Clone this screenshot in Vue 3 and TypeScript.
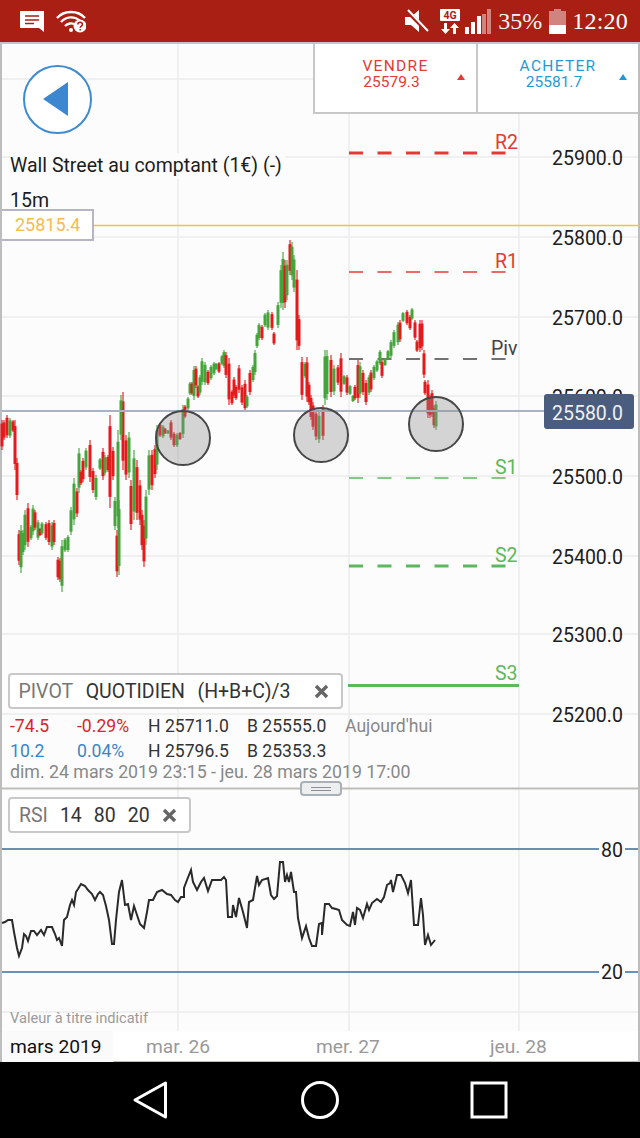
<script setup lang="ts">
type Bar = [number, number, number, 'r' | 'g']

// x, haut, bas, couleur - relevés sur le graphique
const bars: Bar[] = [
  [2, 420, 450, 'r'], [4, 420, 440, 'r'], [7, 415, 438, 'r'], [10, 418, 438, 'g'], [13, 420, 432, 'r'], [15, 420, 470, 'r'],
  [17, 458, 500, 'r'], [19, 530, 565, 'r'], [21, 525, 573, 'g'], [23, 530, 555, 'g'], [25, 510, 550, 'g'], [28, 503, 547, 'r'],
  [31, 525, 540, 'g'], [33, 505, 535, 'g'], [35, 510, 530, 'r'], [38, 520, 540, 'g'], [40, 528, 536, 'r'], [42, 522, 535, 'g'],
  [46, 522, 540, 'r'], [49, 520, 545, 'r'], [52, 522, 550, 'g'], [54, 520, 545, 'r'], [58, 557, 580, 'r'], [60, 558, 582, 'r'],
  [62, 540, 592, 'g'], [65, 538, 552, 'g'], [68, 535, 552, 'g'], [71, 507, 535, 'g'], [74, 478, 525, 'g'], [77, 488, 517, 'r'],
  [79, 448, 493, 'g'], [81, 470, 485, 'r'], [83, 458, 482, 'r'], [86, 448, 470, 'g'], [90, 440, 482, 'r'], [93, 468, 493, 'r'],
  [96, 475, 500, 'g'], [100, 458, 470, 'g'], [103, 448, 480, 'r'], [105, 455, 475, 'g'], [108, 455, 472, 'r'], [110, 415, 508, 'r'],
  [113, 447, 480, 'r'], [115, 497, 530, 'g'], [117, 530, 577, 'r'], [119, 500, 575, 'g'], [118, 430, 528, 'g'], [123, 392, 470, 'r'],
  [121, 395, 440, 'g'], [126, 435, 480, 'r'], [129, 432, 478, 'g'], [131, 480, 530, 'r'], [134, 450, 520, 'g'], [137, 460, 520, 'r'],
  [140, 480, 525, 'r'], [142, 510, 550, 'r'], [144, 520, 567, 'r'], [146, 490, 545, 'g'], [149, 450, 495, 'g'], [152, 450, 490, 'r'],
  [155, 445, 478, 'r'], [157, 425, 470, 'g'], [160, 423, 437, 'r'], [163, 425, 438, 'g'], [165, 428, 434, 'r'], [168, 430, 434, 'g'],
  [171, 420, 440, 'r'], [174, 432, 447, 'r'], [177, 433, 447, 'g'], [180, 432, 440, 'r'], [183, 405, 438, 'g'], [185, 405, 418, 'r'],
  [188, 397, 410, 'g'], [190, 382, 395, 'g'], [192, 382, 395, 'r'], [194, 366, 400, 'g'], [196, 366, 388, 'r'], [198, 385, 398, 'r'],
  [200, 375, 395, 'g'], [202, 358, 385, 'g'], [205, 362, 385, 'g'], [208, 370, 385, 'r'], [211, 365, 380, 'g'], [214, 362, 375, 'g'],
  [216, 363, 370, 'g'], [219, 362, 373, 'r'], [222, 355, 365, 'g'], [224, 350, 368, 'g'], [226, 352, 378, 'r'], [229, 358, 405, 'r'],
  [232, 390, 405, 'r'], [234, 377, 398, 'r'], [236, 385, 400, 'r'], [239, 365, 393, 'r'], [242, 385, 405, 'r'], [245, 380, 412, 'r'],
  [247, 395, 408, 'g'], [250, 370, 395, 'r'], [253, 365, 382, 'g'], [255, 350, 375, 'g'], [257, 333, 348, 'g'], [259, 323, 340, 'g'],
  [262, 325, 340, 'r'], [265, 313, 327, 'g'], [268, 310, 330, 'g'], [272, 312, 330, 'r'], [274, 332, 345, 'r'], [278, 302, 328, 'g'],
  [281, 265, 308, 'g'], [283, 252, 310, 'g'], [285, 260, 308, 'r'], [287, 260, 300, 'g'], [290, 240, 275, 'r'], [292, 242, 280, 'g'],
  [294, 255, 292, 'g'], [297, 270, 350, 'r'], [299, 315, 350, 'r'], [302, 357, 400, 'r'], [305, 362, 378, 'g'], [307, 357, 402, 'r'],
  [309, 382, 405, 'r'], [311, 395, 420, 'r'], [313, 402, 430, 'r'], [316, 410, 440, 'r'], [319, 412, 443, 'g'], [323, 405, 440, 'r'],
  [325, 350, 405, 'g'], [327, 350, 400, 'g'], [331, 355, 397, 'r'], [334, 365, 395, 'g'], [338, 365, 385, 'r'], [341, 353, 397, 'r'],
  [344, 375, 385, 'g'], [347, 375, 395, 'r'], [350, 385, 395, 'g'], [353, 395, 402, 'g'], [355, 385, 400, 'r'], [358, 360, 403, 'r'],
  [360, 362, 398, 'g'], [363, 370, 395, 'r'], [366, 380, 405, 'r'], [369, 375, 395, 'g'], [371, 370, 392, 'r'], [374, 365, 380, 'g'],
  [377, 360, 372, 'g'], [380, 350, 365, 'g'], [382, 360, 378, 'r'], [385, 358, 366, 'g'], [388, 350, 360, 'g'], [391, 340, 358, 'g'],
  [394, 330, 348, 'g'], [398, 322, 345, 'g'], [400, 320, 342, 'r'], [403, 312, 322, 'g'], [407, 310, 325, 'r'], [410, 315, 330, 'r'],
  [412, 308, 320, 'g'], [415, 320, 340, 'r'], [417, 340, 352, 'r'], [420, 320, 352, 'r'], [422, 320, 350, 'r'], [424, 350, 378, 'r'],
  [425, 380, 395, 'r'], [428, 380, 418, 'r'], [430, 395, 418, 'r'], [432, 390, 417, 'r'], [434, 405, 428, 'r'], [436, 401, 430, 'g'],
]

const rsi: number[][] = [
  [2, 923], [5, 922], [8, 920], [12, 920], [14, 932], [17, 948], [19, 956], [22, 948], [24, 934], [26, 936], [28, 941], [31, 931],
  [34, 931], [37, 935], [41, 930], [44, 935], [47, 927], [52, 927], [55, 934], [57, 940], [59, 938], [62, 946], [64, 920], [67, 917],
  [70, 905], [72, 900], [74, 905], [76, 892], [78, 889], [81, 884], [85, 886], [88, 890], [92, 894], [95, 900], [98, 894], [100, 892],
  [103, 895], [106, 906], [109, 920], [112, 944], [114, 944], [116, 920], [119, 892], [122, 880], [125, 905], [128, 904], [131, 920],
  [134, 906], [137, 915], [140, 924], [144, 928], [147, 912], [149, 900], [153, 900], [157, 892], [162, 890], [167, 894], [171, 895],
  [175, 900], [178, 902], [181, 897], [184, 897], [184, 888], [187, 880], [191, 870], [193, 882], [197, 890], [201, 882], [204, 878],
  [208, 891], [212, 880], [217, 880], [221, 880], [224, 877], [226, 880], [228, 917], [232, 917], [233, 905], [236, 917], [239, 898],
  [243, 912], [247, 928], [249, 902], [253, 900], [257, 876], [259, 885], [262, 880], [268, 878], [271, 895], [274, 899], [277, 896],
  [280, 862], [283, 862], [285, 882], [287, 875], [289, 882], [291, 872], [294, 892], [296, 892], [298, 918], [302, 938], [306, 926],
  [309, 938], [312, 946], [316, 946], [319, 924], [322, 923], [322, 935], [325, 904], [329, 904], [332, 908], [336, 909], [339, 910],
  [342, 920], [347, 925], [350, 926], [353, 912], [355, 925], [357, 908], [360, 910], [363, 918], [367, 904], [369, 910], [372, 903],
  [377, 899], [381, 902], [384, 897], [387, 885], [390, 883], [391, 880], [393, 892], [397, 875], [401, 875], [405, 883], [408, 893],
  [411, 880], [414, 925], [418, 925], [421, 898], [423, 915], [425, 945], [428, 935], [431, 945], [435, 940],
]
const rsiPoints = rsi.map((p) => p.join(',')).join(' ')

const gridY = [79, 157, 237, 317, 396, 476, 556, 634, 714, 849, 1012]
const gridX = [178, 349, 519]
const axis = [
  { y: 157, label: '25900.0' }, { y: 237, label: '25800.0' }, { y: 317, label: '25700.0' }, { y: 396, label: '25600.0' },
  { y: 476, label: '25500.0' }, { y: 556, label: '25400.0' }, { y: 634, label: '25300.0' }, { y: 714, label: '25200.0' },
]
const levels = [
  { name: 'R2', x: 495, y: 153, w: 3, c: '#e53935', ty: 149 },
  { name: 'R1', x: 495, y: 272, w: 1.5, c: '#e53935', ty: 268 },
  { name: 'Piv', x: 491, y: 359, w: 1.5, c: '#444', ty: 355 },
  { name: 'S1', x: 495, y: 478, w: 1.5, c: '#5cb85c', ty: 474 },
  { name: 'S2', x: 495, y: 566, w: 3, c: '#5cb85c', ty: 562 },
]
const circles = [[183, 438], [321, 435], [436, 424]]
const stats = [
  { a: '-74.5', b: '-0.29%', h: 'H 25711.0', l: 'B 25555.0', cls: 'neg', day: "Aujourd'hui" },
  { a: '10.2', b: '0.04%', h: 'H 25796.5', l: 'B 25353.3', cls: 'pos', day: '' },
]
</script>

<template>
  <div class="page">
    <header class="status">
      <svg class="ic" width="24" height="21" viewBox="0 0 24 21"><path d="M0 0h24v21l-5-4H0z" fill="#fff" /><path d="M5 5h14M5 9h14M5 12.500h9" stroke="#a91f13" stroke-width="1.500" /></svg>
      <svg class="ic wifi" width="30" height="24" viewBox="0 0 30 24" fill="none">
        <path d="M1 9C8 1 22 1 29 9M5 13C10 7 19 7 24 12M9 17c3-3 7-3 9-2" stroke="#fff" stroke-width="2.400" />
        <circle cx="15" cy="21" r="2" fill="#fff" />
        <circle cx="24" cy="17" r="6.500" fill="#fff" />
        <path d="M21.800 15.500c0-3 4.600-3 4.600 0 0 1.600-2.200 1.600-2.200 3.300M24.200 20v1.500" stroke="#a91f13" stroke-width="1.500" />
      </svg>
      <span class="spacer"></span>
      <svg class="ic" width="24" height="24" viewBox="0 0 24 24"><path d="M0 8h6l8-7v22l-8-7H0z" fill="#fff" /><path d="M2 2l21 21" stroke="#a91f13" stroke-width="4" /><path d="M3 1l20 21" stroke="#fff" stroke-width="2" /></svg>
      <svg class="ic net" width="20" height="25" viewBox="0 0 20 25">
        <rect y="0" width="20" height="12" rx="1" fill="#fff" />
        <text x="10" y="10" class="net-t">4G</text>
        <path d="M4 14h3v6h3l-4.500 5-4.500-5h3zM13 25v-6h-3l4.500-5 4.500 5h-3v6z" fill="#fff" />
      </svg>
      <svg class="ic sig" width="26" height="25" viewBox="0 0 26 25">
        <path d="M0 18h4v7H0zM6 13h4v12H6zM12 7h4v18h-4z" fill="#fff" />
        <path d="M17 5h4v20h-4zM22 0h4v25h-4z" fill="#fff" opacity=".45" />
      </svg>
      <span class="pct">35%</span>
      <svg class="ic bat" width="17" height="25" viewBox="0 0 17 25"><path d="M5 0h7v2h5v23H0V2h5z" fill="#fff" opacity=".45" /><path d="M0 16h17v9H0z" fill="#fff" /></svg>
      <span class="clock">12:20</span>
    </header>

    <main class="chart">
      <svg class="plot" width="640" height="1018" viewBox="0 44 640 1018">
        <g class="grid">
          <line v-for="y in gridY" :key="y" x1="2" x2="638" :y1="y" :y2="y" />
          <line v-for="x in gridX" :key="x" :x1="x" :x2="x" y1="44" y2="1032" />
        </g>

        <line class="orange" x1="94" x2="640" y1="225.500" y2="225.500" />

        <g v-for="l in levels" :key="l.name">
          <line x1="349" x2="506" :y1="l.y" :y2="l.y" :stroke="l.c" :stroke-width="l.w" stroke-dasharray="14 14.500" />
          <text :x="l.x" :y="l.ty" class="lvl" :fill="l.c">{{ l.name }}</text>
        </g>
        <line x1="348" x2="519" y1="685.500" y2="685.500" stroke="#5cb85c" stroke-width="3" />
        <text x="495" y="680" class="lvl" fill="#5cb85c">S3</text>

        <text v-for="a in axis" :key="a.y" x="552" :y="a.y + 7.500" class="ax">{{ a.label }}</text>

        <g v-for="b in bars" :key="b[0] + '-' + b[1]">
          <rect :x="b[0] - 0.7" :y="b[1]" width="1.400" :height="b[2] - b[1]" :class="b[3]" opacity=".8" />
          <rect :x="b[0] - 1.500" :y="b[1] + (b[2] - b[1]) * 0.12" width="3" :height="(b[2] - b[1]) * 0.76" :class="b[3]" />
        </g>

        <line class="price" x1="2" x2="544" y1="411" y2="411" />
        <circle v-for="c in circles" :key="c[0]" :cx="c[0]" :cy="c[1]" r="27" class="zone" />

        <rect x="544" y="394" width="90" height="35" rx="3" fill="#4a5d7e" />
        <text x="552" y="419.500" class="ax light">25580.0</text>

        <line class="sep" x1="2" x2="638" y1="788.500" y2="788.500" />

        <line class="blue" x1="2" x2="638" y1="849" y2="849" />
        <line class="blue" x1="2" x2="638" y1="972" y2="972" />
        <rect x="599" y="840" width="26" height="20" fill="#fcfcfc" />
        <rect x="599" y="962" width="26" height="20" fill="#fcfcfc" />
        <text x="601" y="856.500" class="ax">80</text>
        <text x="601" y="979" class="ax">20</text>
        <polyline class="rsi" :points="rsiPoints" />
      </svg>

      <button class="back" type="button">
        <svg width="26" height="35" viewBox="0 0 26 35"><path d="M25 0v34L0 17z" fill="#3c87cf" /></svg>
      </button>

      <div class="quotes">
        <div class="quote sell">
          <div class="q-text"><span class="q-name">VENDRE</span><span class="q-val">25579.3</span></div>
          <i class="tri"></i>
        </div>
        <div class="quote buy">
          <div class="q-text"><span class="q-name">ACHETER</span><span class="q-val">25581.7</span></div>
          <i class="tri"></i>
        </div>
      </div>

      <div class="title">Wall Street au comptant (1€) (-)</div>
      <div class="tf">15m</div>
      <div class="last">25815.4</div>

      <div class="panel">
        <div class="tag pivot">
          <span class="g">PIVOT</span><span>QUOTIDIEN</span><span>(H+B+C)/3</span>
          <svg class="x" width="15" height="15" viewBox="0 0 15 15"><path d="M2 2l11 11M13 2L2 13" stroke="#666" stroke-width="3.400" /></svg>
        </div>
        <div class="stats">
          <div v-for="s in stats" :key="s.a" class="row">
            <span class="c1" :class="s.cls">{{ s.a }}</span>
            <span class="c2" :class="s.cls">{{ s.b }}</span>
            <span class="c3">{{ s.h }}</span>
            <span class="c4">{{ s.l }}</span>
            <span class="day">{{ s.day }}</span>
          </div>
          <div class="range">dim. 24 mars 2019 23:15 - jeu. 28 mars 2019 17:00</div>
        </div>
      </div>

      <div class="handle"><i></i></div>

      <div class="tag rsi-tag">
        <span class="g">RSI</span><span>14</span><span>80</span><span>20</span>
        <svg class="x" width="15" height="15" viewBox="0 0 15 15"><path d="M2 2l11 11M13 2L2 13" stroke="#666" stroke-width="3.400" /></svg>
      </div>

      <div class="note">Valeur à titre indicatif</div>

      <footer class="dates">
        <span class="month">mars 2019</span>
        <span class="d d1">mar. 26</span>
        <span class="d d2">mer. 27</span>
        <span class="d d3">jeu. 28</span>
      </footer>
    </main>

    <nav class="nav">
      <svg width="36" height="40" viewBox="0 0 36 40" fill="none"><path d="M33.500 3v34L3 20z" stroke="#fff" stroke-width="3" stroke-linejoin="round" /></svg>
      <svg class="home" width="40" height="40" viewBox="0 0 40 40" fill="none"><circle cx="20" cy="20" r="17.500" stroke="#fff" stroke-width="3" /></svg>
      <svg class="recent" width="40" height="40" viewBox="0 0 40 40" fill="none"><rect x="3" y="3" width="34" height="34" stroke="#fff" stroke-width="3" /></svg>
    </nav>
  </div>
</template>

<style scoped>
.page {
  width: 640px;
  height: 1138px;
  display: flex;
  flex-direction: column;
  overflow: hidden;
  font-family: Roboto, "Liberation Sans", sans-serif;
}

.status {
  height: 42px;
  background: #a91f13;
  border-bottom: 2px solid #c4c4c4;
  display: flex;
  align-items: center;
  padding: 0 12px 0 20px;
  color: #fff;
  font-family: "Liberation Serif", serif;
  flex: none;
}
.ic { flex: none; }
.wifi { margin-left: 12px; }
.spacer { flex: 1; }
.net { margin-left: 11px; }
.net-t {
  font: 700 10.500px Roboto, sans-serif;
  text-anchor: middle;
  fill: #a91f13;
}
.sig { margin-left: 5px; }
.pct { font-size: 24px; margin-left: 7px; opacity: .95; }
.bat { margin-left: 7px; }
.clock { font-size: 24px; margin-left: 6px; letter-spacing: .2px; }

.chart {
  position: relative;
  flex: 1;
  background: #fcfcfc;
  border-left: 2px solid #bdbdbd;
  border-right: 2px solid #bdbdbd;
}
.plot { position: absolute; left: -2px; top: 0; }

.grid line { stroke: #ececec; stroke-width: 1.500; }
.orange { stroke: #f9bb4c; stroke-width: 1.500; }
.price { stroke: #a9b2c4; stroke-width: 2; }
.sep { stroke: #bdbdb5; stroke-width: 2; }
.blue { stroke: #3a6ea5; stroke-width: 1.500; }
.rsi { fill: none; stroke: #2a2a2a; stroke-width: 2; }
.zone { fill: rgba(140, 140, 140, .36); stroke: #474747; stroke-width: 2; }
.r { fill: #e41a1c; }
.g { fill: #43a53a; }
.lvl { font-size: 19.500px; }
.ax { font-size: 19.500px; fill: #1c1c1c; }
.light { fill: #f0f0f0; }

.back {
  position: absolute;
  left: 21px;
  top: 21px;
  width: 69px;
  height: 69px;
  padding: 0 0 0 4px;
  box-sizing: border-box;
  border: 2px solid #3f8bd0;
  border-radius: 50%;
  background: #fff;
  display: flex;
  align-items: center;
  justify-content: center;
}
.back svg { margin-right: 8px; }

.quotes {
  position: absolute;
  right: 0;
  top: 0;
  width: 325px;
  height: 70px;
  box-sizing: border-box;
  display: flex;
  background: #fff;
  border-left: 2px solid #c8c8c8;
  border-bottom: 2px solid #c8c8c8;
}
.quote {
  position: relative;
  display: flex;
  justify-content: center;
  padding-top: 14px;
  box-sizing: border-box;
}
.sell { width: 163px; flex: none; color: #e53935; border-right: 2px solid #c8c8c8; }
.buy { flex: 1; color: #1e9bd7; }
.q-text {
  display: flex;
  flex-direction: column;
  align-items: center;
  line-height: 16px;
}
.q-name { font-size: 15.500px; letter-spacing: 1.300px; }
.q-val { font-size: 15.500px; padding-right: 8px; }
.tri {
  position: absolute;
  right: 11px;
  top: 30px;
  border-left: 4px solid transparent;
  border-right: 4px solid transparent;
  border-bottom: 6px solid currentColor;
}

.title, .tf {
  position: absolute;
  left: 8px;
  font-size: 19.500px;
  color: #1c1c1c;
  line-height: 26px;
  background: #fcfcfc;
  white-space: nowrap;
}
.title { top: 109px; padding-right: 3px; }
.tf { top: 145px; padding-right: 3px; line-height: 24px; }
.last {
  position: absolute;
  left: 0;
  top: 165px;
  width: 92px;
  height: 32px;
  box-sizing: border-box;
  background: #fff;
  border: 2px solid #b5b5c5;
  border-left: none;
  color: #f9bb4c;
  font-size: 18px;
  line-height: 28px;
  padding-left: 13px;
}

.tag {
  display: flex;
  align-items: center;
  box-sizing: border-box;
  background: #fff;
  border: 2px solid #c8c8c8;
  border-radius: 4px;
  font-size: 19.500px;
  color: #333;
  white-space: nowrap;
}
.tag .g { color: #777; fill: none; }
.tag .x { margin-left: auto; flex: none; }
.pivot {
  width: 335px;
  height: 36px;
  padding: 0 12px 0 8.500px;
  gap: 12.500px;
}
.panel { position: absolute; left: 6px; top: 629px; }
.stats { margin: 6px 0 0 2px; font-size: 17.600px; color: #333; }
.row { display: flex; height: 25px; line-height: 22px; }
.c1 { width: 67px; }
.c2 { width: 71px; }
.c3 { width: 99px; }
.c4 { width: 98px; }
.day { color: #888; }
.neg { color: #d7262a; }
.pos { color: #3d85c6; }
.range { color: #888; line-height: 18px; margin-top: -2px; font-size: 17.750px; }

.handle {
  position: absolute;
  left: 298px;
  top: 737px;
  width: 42px;
  height: 15px;
  box-sizing: border-box;
  background: #eceef0;
  border: 2px solid #aab0b8;
  border-radius: 4px;
  display: flex;
  align-items: center;
  justify-content: center;
}
.handle i {
  width: 20px;
  height: 4px;
  box-sizing: border-box;
  border-top: 1px solid #8a8f96;
  border-bottom: 1px solid #8a8f96;
}

.rsi-tag {
  position: absolute;
  left: 6px;
  top: 753px;
  width: 183px;
  height: 36px;
  padding: 0 17px 0 9px;
  gap: 12px;
}

.note {
  position: absolute;
  left: 8px;
  top: 965px;
  font-size: 14.600px;
  line-height: 18px;
  color: #9a9a9a;
}

.dates {
  position: absolute;
  left: 0;
  right: 0;
  bottom: 0;
  height: 30px;
  background: #fff;
  font-size: 19.200px;
  line-height: 32px;
  border-bottom: 2px solid #bdbdb5;
  box-sizing: content-box;
  margin-bottom: -1px;
}
.month {
  position: absolute;
  left: 0;
  width: 111px;
  padding-left: 8px;
  box-sizing: border-box;
  background: #fafafa;
  color: #111;
}
.d { position: absolute; color: #999; }
.d1 { left: 144px; }
.d2 { left: 314px; }
.d3 { left: 488px; }

.nav {
  height: 76px;
  flex: none;
  background: #000;
  display: flex;
  align-items: center;
  padding-left: 132px;
  position: relative;
}
.home { margin-left: 132px; }
.recent { margin-left: 129px; }
</style>

<style>
html, body { margin: 0; background: #000; }
</style>
